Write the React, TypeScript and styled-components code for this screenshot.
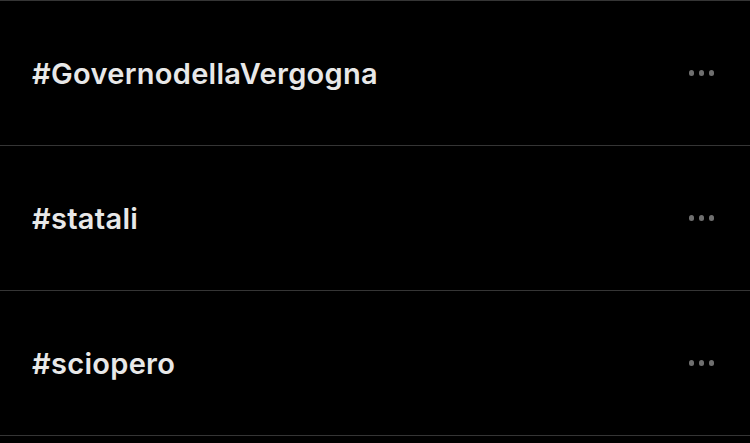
import React from "react";
import styled, { createGlobalStyle } from "styled-components";

const Global = createGlobalStyle`
  html, body { margin: 0; padding: 0; background: #000; }
  body { font-family: Inter, "Noto Sans", sans-serif; }
`;

const List = styled.div`
  display: flex;
  flex-direction: column;
  width: 750px;
  height: 443px;
  background: #000;
  border-top: 1px solid #353535;
  box-sizing: border-box;
  overflow: hidden;
`;

const Row = styled.div`
  display: flex;
  align-items: center;
  justify-content: space-between;
  height: 144px;
  flex: 0 0 144px;
  padding: 0 36px 0 32px;
  border-bottom: 1px solid #353535;
`;

const Tag = styled.span`
  color: #e8e8e8;
  font-size: 29px;
  font-weight: 600;
  letter-spacing: 0.3px;
`;

const Dots = styled.div`
  display: flex;
  gap: 4.5px;
`;

const Dot = styled.span`
  width: 5.5px;
  height: 5.5px;
  border-radius: 50%;
  background: #6f6f6f;
`;

const tags = ["#GovernodellaVergogna", "#statali", "#sciopero"];

export default function App() {
  return (
    <>
      <Global />
      <List>
        {tags.map((t) => (
          <Row key={t}>
            <Tag>{t}</Tag>
            <Dots>
              <Dot />
              <Dot />
              <Dot />
            </Dots>
          </Row>
        ))}
      </List>
    </>
  );
}
